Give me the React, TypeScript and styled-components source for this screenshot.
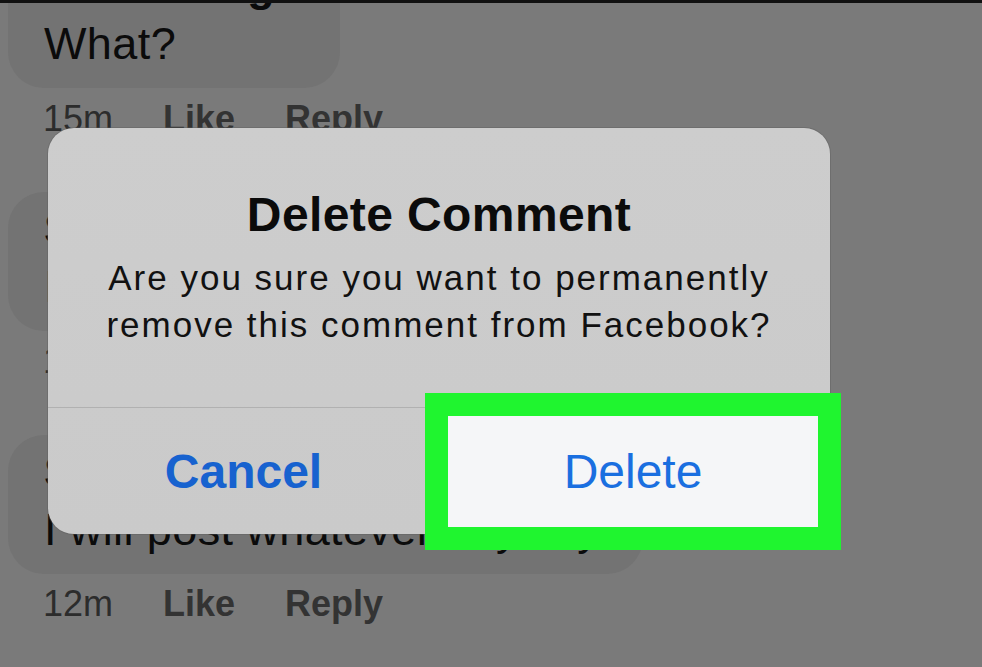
import React from "react";
import styled, { createGlobalStyle } from "styled-components";

const GlobalStyle = createGlobalStyle`
  html, body {
    margin: 0;
    padding: 0;
    background: #7a7a7a;
    overflow: hidden;
  }
  * { box-sizing: border-box; }
`;

const Screen = styled.div`
  position: relative;
  width: 982px;
  height: 667px;
  overflow: hidden;
  background: #7a7a7a;
  border-top: 3px solid #111111;
  font-family: "Liberation Sans", Arial, sans-serif;
`;

const Feed = styled.div`
  display: flex;
  flex-direction: column;
  gap: 51.4px;
  margin-top: -54px;
  padding-left: 8px;
`;

const Comment = styled.div`
  display: flex;
  flex-direction: column;
  align-items: flex-start;
`;

const Bubble = styled.div<{ $width: number }>`
  width: ${(p) => p.$width}px;
  padding: 8px 36px 15px;
  border-radius: 36px;
  background: #737373;
  color: #0b0b0b;
  font-size: 45px;
  line-height: 58px;
  letter-spacing: 0.4px;
  white-space: nowrap;
  overflow: hidden;
`;

const Name = styled.div`
  font-weight: 700;
`;

const Text = styled.div`
  font-weight: 400;
`;

const Meta = styled.div`
  display: flex;
  gap: 50px;
  margin-top: 8.5px;
  padding-left: 35px;
  font-size: 36px;
  line-height: 44px;
`;

const Time = styled.span`
  color: #2c2c2c;
  font-weight: 400;
`;

const Action = styled.span`
  color: #333333;
  font-weight: 700;
`;

const Dialog = styled.div`
  position: absolute;
  left: 48px;
  top: 125px;
  width: 782px;
  border-radius: 26px;
  background: linear-gradient(180deg, #cdcdcd 0%, #cacaca 100%);
  box-shadow: 0 0 0 1px rgba(90, 90, 90, 0.35);
`;

const DialogBody = styled.div`
  display: flex;
  flex-direction: column;
  align-items: center;
  gap: 11px;
  padding: 59px 30px 59px;
  text-align: center;
`;

const Title = styled.div`
  font-size: 48px;
  line-height: 56px;
  font-weight: 700;
  color: #0b0b0b;
  letter-spacing: 0.4px;
`;

const Message = styled.div`
  font-size: 35px;
  line-height: 47px;
  font-weight: 400;
  color: #111111;
  letter-spacing: 2px;
`;

const Actions = styled.div`
  display: grid;
  grid-template-columns: 1fr 1fr;
  height: 127px;
  border-top: 1px solid #b1b1b1;
`;

const ActionButton = styled.button<{ $primary?: boolean }>`
  display: flex;
  align-items: center;
  justify-content: center;
  border: none;
  border-radius: 0;
  padding: 0;
  margin: ${(p) => (p.$primary ? "8px 12px 7px 9px" : "0")};
  background: ${(p) => (p.$primary ? "#f5f6f8" : "transparent")};
  box-shadow: ${(p) => (p.$primary ? "0 0 0 23px #1ff52f" : "none")};
  outline: none;
  font-family: "Liberation Sans", Arial, sans-serif;
  font-size: 48px;
  font-weight: ${(p) => (p.$primary ? 400 : 700)};
  color: ${(p) => (p.$primary ? "#1a6fe0" : "#1762cf")};
  cursor: pointer;
`;

const comments = [
  { name: "Tim Young", text: "What?", time: "15m", width: 332 },
  { name: "Sam Lewis", text: "I don't care, delete it", time: "14m", width: 700 },
  { name: "Sam Lewis", text: "I will post whatever anyway", time: "12m", width: 635 },
];

export default function App() {
  return (
    <>
      <GlobalStyle />
      <Screen>
        <Feed>
          {comments.map((c, i) => (
            <Comment key={i}>
              <Bubble $width={c.width}>
                <Name>{c.name}</Name>
                <Text>{c.text}</Text>
              </Bubble>
              <Meta>
                <Time>{c.time}</Time>
                <Action>Like</Action>
                <Action>Reply</Action>
              </Meta>
            </Comment>
          ))}
        </Feed>
        <Dialog>
          <DialogBody>
            <Title>Delete Comment</Title>
            <Message>
              Are you sure you want to permanently
              <br />
              remove this comment from Facebook?
            </Message>
          </DialogBody>
          <Actions>
            <ActionButton>Cancel</ActionButton>
            <ActionButton $primary>Delete</ActionButton>
          </Actions>
        </Dialog>
      </Screen>
    </>
  );
}
